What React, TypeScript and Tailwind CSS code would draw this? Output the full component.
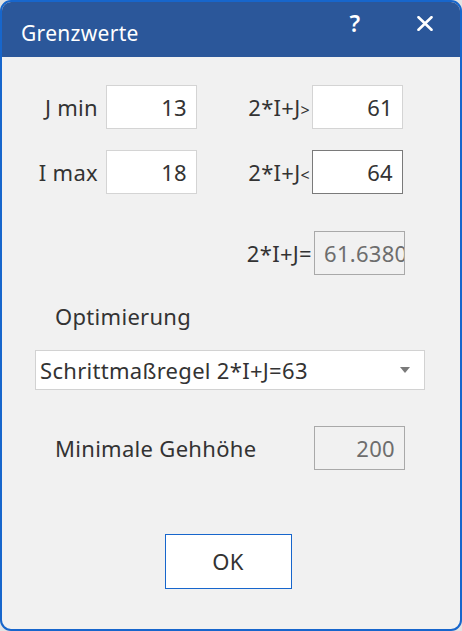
import React from 'react'

const FONT = { fontFamily: '"Noto Sans", "Open Sans", sans-serif' }

function Field({ value, disabled, focused, className = '' }: { value: string; disabled?: boolean; focused?: boolean; className?: string }) {
  return (
    <div
      className={
        'flex h-[44px] w-[91px] shrink-0 items-center overflow-hidden border px-[9px] text-[22px] leading-none tracking-[0.3px] ' +
        (disabled
          ? 'border-[#a9a9a9] bg-[#f1f1f1] text-[#6d6d6d] '
          : focused
            ? 'justify-end border-[#7a7a7a] bg-white text-[#333333] '
            : 'justify-end border-[#d4d4d4] bg-white text-[#333333] ') +
        className
      }
    >
      <span className="whitespace-nowrap">{value}</span>
    </div>
  )
}

function RelLabel({ op }: { op: string }) {
  return (
    <div className="flex w-[115px] shrink-0 items-baseline justify-end pr-[2px] text-[22px] tracking-[0.3px] text-[#333333]">
      <span>2*I+J</span>
      <span className={op === '=' ? '' : 'text-[16px]'}>{op}</span>
    </div>
  )
}

export default function App() {
  return (
    <div className="h-[631px] w-[462px] bg-[#e3e3e3]" style={FONT}>
      <div className="flex h-full w-full flex-col overflow-hidden rounded-[11px] border-2 border-[#1766cc] bg-[#f1f1f1]">
        {/* Title bar */}
        <div className="flex h-[55px] shrink-0 items-start bg-[#2b579a] text-white">
          <div className="pl-[19px] pt-[21px] text-[21px] leading-none tracking-[0.3px]">Grenzwerte</div>
          <div className="ml-auto pt-[10px] text-[23px] font-semibold leading-none">?</div>
          <div className="ml-[57px] mr-[27px] pt-[14px]">
            <svg width="16" height="15" viewBox="0 0 16 15">
              <path d="M1.5 1.2 L14.5 13.8 M14.5 1.2 L1.5 13.8" stroke="white" strokeWidth="2.6" strokeLinecap="round" />
            </svg>
          </div>
        </div>

        {/* Body */}
        <div className="flex flex-1 flex-col text-[22px] tracking-[0.3px] text-[#333333]">
          <div className="mt-[28px] flex items-center">
            <div className="w-[96px] shrink-0 text-right">J min</div>
            <Field value="13" className="ml-[8px]" />
            <RelLabel op=">" />
            <Field value="61" />
          </div>
          <div className="mt-[21px] flex items-center">
            <div className="w-[96px] shrink-0 text-right">I max</div>
            <Field value="18" className="ml-[8px]" />
            <RelLabel op="<" />
            <Field value="64" focused />
          </div>
          <div className="mt-[37px] flex items-center">
            <div className="ml-[197px]" />
            <RelLabel op="=" />
            <Field value="61.6380" disabled />
          </div>

          <div className="ml-[53px] mt-[30px] leading-none">Optimierung</div>

          <div className="ml-[33px] mt-[23px] flex h-[40px] w-[390px] items-center border border-[#d2d2d2] bg-white pl-[4px] pr-[14px]">
            <span className="whitespace-nowrap">Schrittmaßregel 2*I+J=63</span>
            <svg className="ml-auto" width="10" height="6" viewBox="0 0 10 6">
              <path d="M0 0 H10 L5 6 Z" fill="#7a7a7a" />
            </svg>
          </div>

          <div className="mt-[36px] flex items-center">
            <div className="ml-[53px] w-[259px] shrink-0">Minimale Gehhöhe</div>
            <Field value="200" disabled className="justify-end" />
          </div>

          <div className="mt-[64px] flex justify-center pr-[6px]">
            <button className="flex h-[55px] w-[127px] items-center justify-center border-[1.5px] border-[#1766cc] bg-white text-[22px] text-[#333333]">
              OK
            </button>
          </div>
        </div>
      </div>
    </div>
  )
}
